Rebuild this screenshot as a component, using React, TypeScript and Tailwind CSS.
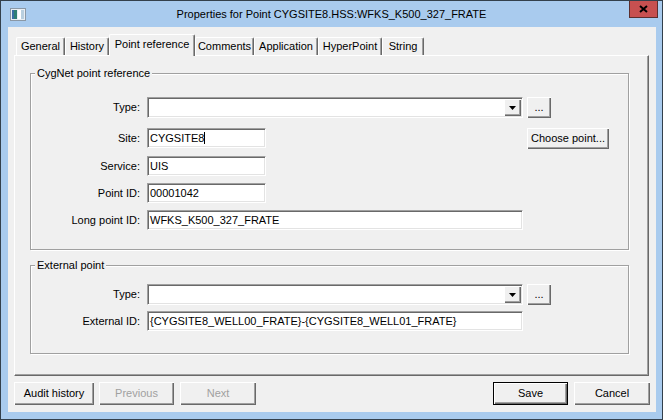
import React from 'react';

const raised =
  'bg-[#f0f0f0] shadow-[inset_1px_1px_0_#fff,inset_-1px_-1px_0_#696969,inset_-2px_-2px_0_#a0a0a0]';
const sunken =
  'border border-t-[#a0a0a0] border-l-[#a0a0a0] border-r-white border-b-white bg-white shadow-[inset_1px_1px_0_#696969,inset_-1px_-1px_0_#e3e3e3]';

const tabs = [
  { label: 'General', w: 'w-[49px]' },
  { label: 'History', w: 'w-[44px]' },
  { label: 'Point reference', w: 'w-[86px]', active: true },
  { label: 'Comments', w: 'w-[59px]' },
  { label: 'Application', w: 'w-[64px]' },
  { label: 'HyperPoint', w: 'w-[64px]' },
  { label: 'String', w: 'w-[42px]' },
];

const Btn: React.FC<{ label: string; className?: string; disabled?: boolean; isDefault?: boolean }> = ({
  label,
  className = '',
  disabled,
  isDefault,
}) => (
  <div
    className={`flex items-center justify-center text-[11px] ${raised} ${className} ${
      disabled ? 'text-[#a0a0a0]' : 'text-black'
    } ${isDefault ? 'border border-black' : ''}`}
  >
    {label}
  </div>
);

const Field: React.FC<{ value?: string; className?: string; caret?: boolean }> = ({ value, className = '', caret }) => (
  <div className={`flex h-[20px] items-center pl-[2px] text-[11px] text-black ${sunken} ${className}`}>
    <span className="whitespace-nowrap">{value}</span>
    {caret && <span className="h-[12px] w-px bg-black" />}
  </div>
);

const Combo: React.FC = () => (
  <div className={`flex h-[21px] w-[376px] justify-end p-[1px] ${sunken}`}>
    <div className={`flex h-full w-[17px] items-center justify-center ${raised}`}>
      <svg width="7" height="4" viewBox="0 0 7 4">
        <polygon points="0,0 7,0 3.5,4" fill="#000" />
      </svg>
    </div>
  </div>
);

const Row: React.FC<{ label: string; className?: string; children: React.ReactNode }> = ({
  label,
  className = '',
  children,
}) => (
  <div className={`flex items-center ${className}`}>
    <div className="w-[109px] text-right text-[11px] text-black">{label}</div>
    <div className="ml-[7px] flex items-start">{children}</div>
  </div>
);

const Group: React.FC<{ title: string; className?: string; children: React.ReactNode }> = ({
  title,
  className = '',
  children,
}) => (
  <div
    className={`ml-[15px] w-[599px] border border-[#a0a0a0] shadow-[1px_1px_0_#fff,inset_1px_1px_0_#fff] ${className}`}
  >
    <div className="-mt-[7px] ml-[4px] w-fit bg-[#f0f0f0] px-[2px] text-[11px] leading-[13px] text-black">{title}</div>
    {children}
  </div>
);

export default function App() {
  return (
    <div className="h-[420px] w-[663px] border border-[#33404c] bg-[#a9cbee] font-['Liberation_Sans',Arial,sans-serif]">
      {/* title bar */}
      <div className="grid h-[26px] grid-cols-[1fr_auto_1fr] items-center">
        <div className="ml-[9px] flex">
          <svg width="16" height="13" viewBox="0 0 16 13">
            <rect x="0.5" y="0.5" width="15" height="12" fill="#e9eef3" stroke="#8a98a6" />
            <rect x="2" y="2" width="5" height="9" fill="#2f7f74" />
            <rect x="2" y="2" width="2" height="9" fill="#3b6ea5" />
            <rect x="8" y="2" width="3" height="9" fill="#ffffff" />
            <rect x="11" y="2" width="3" height="9" fill="#b9cfdf" />
          </svg>
        </div>
        <div className="whitespace-nowrap text-[11px] text-black">Properties for Point CYGSITE8.HSS:WFKS_K500_327_FRATE</div>
        <div className="flex justify-end self-start">
          <div className="mr-[4px] flex h-[17px] w-[29px] items-center justify-center border-x border-b border-[#5c2e2e] bg-[#c75050]">
            <svg width="9" height="8" viewBox="0 0 9 8">
              <path d="M1 1 L8 7 M8 1 L1 7" stroke="#000" strokeWidth="2" />
            </svg>
          </div>
        </div>
      </div>

      {/* client area */}
      <div className="ml-[7px] flex h-[385px] w-[648px] flex-col bg-[#f0f0f0]">
        {/* tabs */}
        <div className="ml-[8px] flex h-[28px] items-end">
          {tabs.map((t) =>
            t.active ? (
              <div
                key={t.label}
                className={`relative z-10 -mb-px flex h-[22px] items-center justify-center rounded-t-[2px] border-x border-t border-l-white border-t-white border-r-[#696969] bg-[#f0f0f0] pb-[2px] text-[11px] text-black shadow-[inset_-1px_0_0_#a0a0a0] ${t.w}`}
              >
                {t.label}
              </div>
            ) : (
              <div
                key={t.label}
                className={`flex h-[18px] items-center justify-center rounded-t-[2px] border-x border-t border-l-white border-t-white border-r-[#696969] text-[11px] text-black shadow-[inset_-1px_0_0_#a0a0a0] ${t.w}`}
              >
                {t.label}
              </div>
            )
          )}
        </div>

        {/* tab panel */}
        <div className="ml-[6px] h-[321px] w-[635px] border border-l-white border-t-white border-r-[#696969] border-b-[#696969] shadow-[inset_-1px_-1px_0_#a0a0a0]">
          <Group title="CygNet point reference" className="mt-[17px] h-[177px]">
            <Row label="Type:" className="mt-[17px]">
              <Combo />
              <Btn label="..." className="ml-[4px] h-[21px] w-[24px]" />
            </Row>
            <Row label="Site:" className="mt-[10px]">
              <Field value="CYGSITE8" caret className="w-[119px]" />
              <Btn label="Choose point..." className="ml-[261px] h-[21px] w-[82px]" />
            </Row>
            <Row label="Service:" className="mt-[7px]">
              <Field value="UIS" className="w-[119px]" />
            </Row>
            <Row label="Point ID:" className="mt-[7px]">
              <Field value="00001042" className="w-[119px]" />
            </Row>
            <Row label="Long point ID:" className="mt-[7px]">
              <Field value="WFKS_K500_327_FRATE" className="w-[376px]" />
            </Row>
          </Group>

          <Group title="External point" className="mt-[15px] h-[89px]">
            <Row label="Type:" className="mt-[12px]">
              <Combo />
              <Btn label="..." className="ml-[4px] h-[21px] w-[24px]" />
            </Row>
            <Row label="External ID:" className="mt-[6px]">
              <Field value="{CYGSITE8_WELL00_FRATE}-{CYGSITE8_WELL01_FRATE}" className="w-[376px]" />
            </Row>
          </Group>
        </div>

        {/* buttons */}
        <div className="ml-[6px] mr-[6px] mt-[6px] flex">
          <Btn label="Audit history" className="h-[23px] w-[80px]" />
          <Btn label="Previous" disabled className="ml-[5px] h-[23px] w-[75px]" />
          <Btn label="Next" disabled className="ml-[6px] h-[23px] w-[76px]" />
          <Btn label="Save" isDefault className="ml-auto h-[23px] w-[75px]" />
          <Btn label="Cancel" className="ml-[6px] h-[23px] w-[76px]" />
        </div>
      </div>
    </div>
  );
}
